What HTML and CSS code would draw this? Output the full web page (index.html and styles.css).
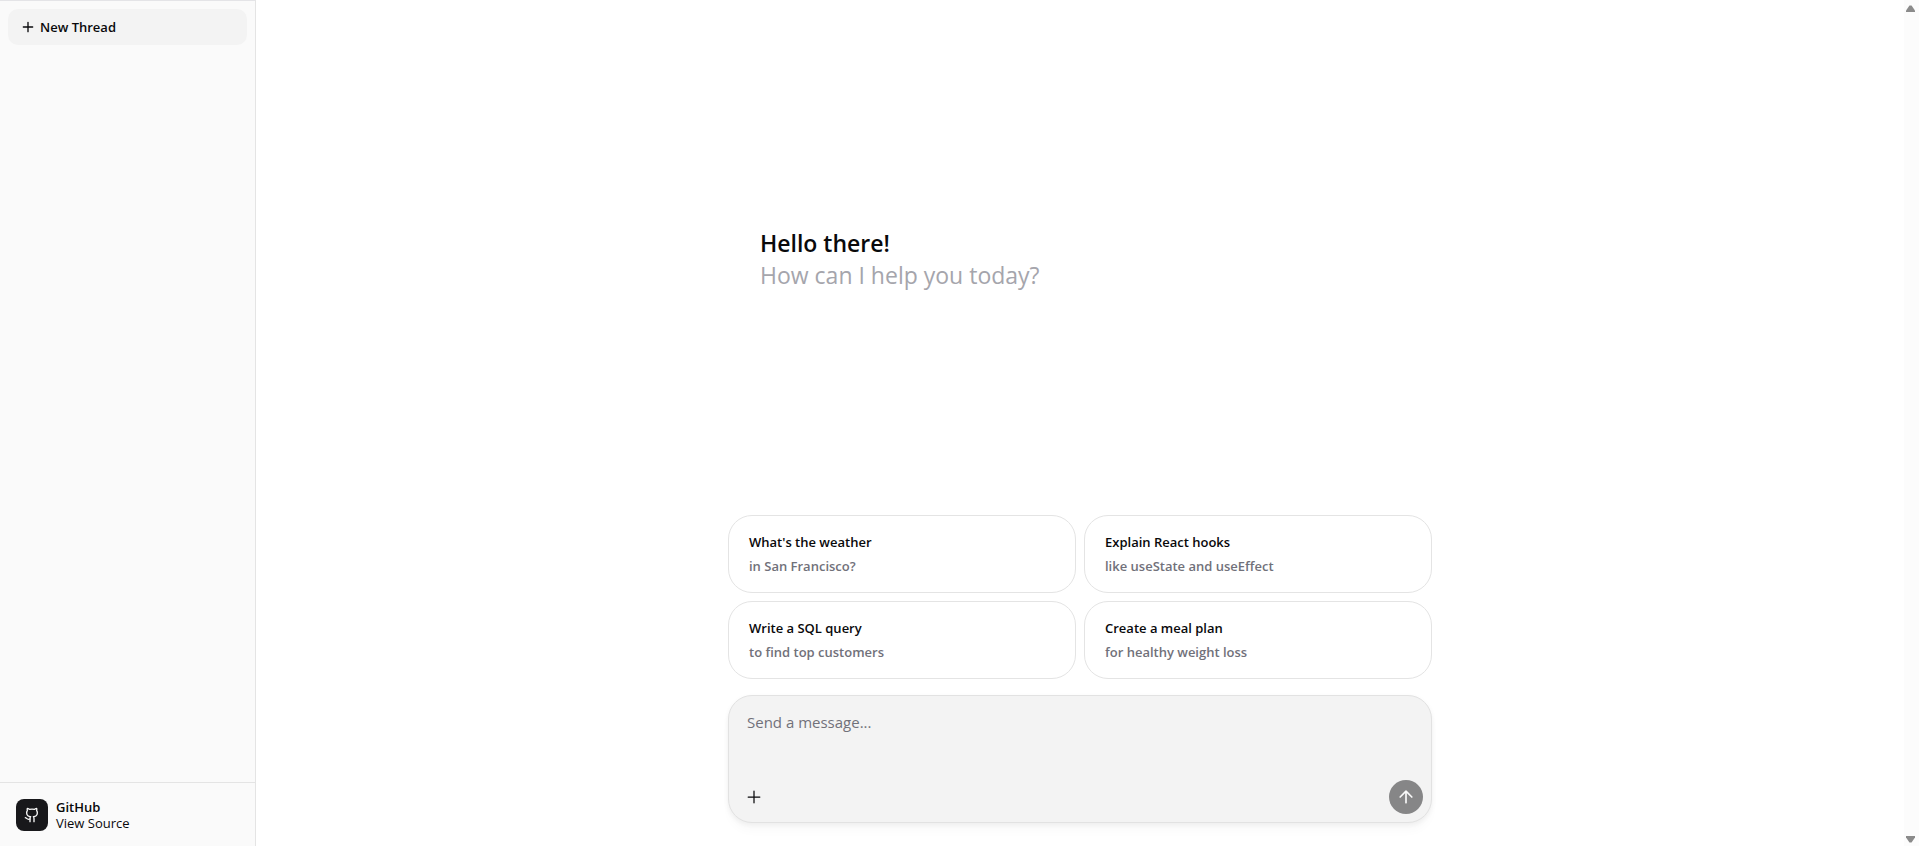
FILE: index.html
```html
<!DOCTYPE html>
<html lang="en">
<head>
<meta charset="utf-8">
<meta name="viewport" content="width=device-width, initial-scale=1">
<title>New Thread</title>
<link rel="stylesheet" href="styles.css">
</head>
<body>
<div class="app">
  <aside class="sidebar">
    <nav class="threads">
      <button class="new-thread" type="button">
        <svg class="icon" viewBox="0 0 24 24" aria-hidden="true"><path d="M5 12h14M12 5v14"/></svg>
        New Thread
      </button>
    </nav>
    <a class="source" href="#">
      <span class="source-logo">
        <svg class="icon" viewBox="0 0 24 24" aria-hidden="true"><path d="M15 22v-4a4.800 4.800 0 0 0-1-3.500c3 0 6-2 6-5.500.08-1.250-.27-2.480-1-3.500.28-1.150.28-2.350 0-3.500 0 0-1 0-3 1.500-2.640-.5-5.360-.5-8 0C6 2 5 2 5 2c-.3 1.150-.3 2.350 0 3.500A5.403 5.403 0 0 0 4 9c0 3.500 3 5.500 6 5.500-.39.49-.68 1.050-.85 1.650-.17.6-.22 1.230-.15 1.850v4"/><path d="M9 18c-4.510 2-5-2-7-2"/></svg>
      </span>
      <span class="source-text">
        <span class="source-name">GitHub</span>
        <span>View Source</span>
      </span>
    </a>
  </aside>
  <main class="chat">
    <div class="thread">
      <div class="welcome">
        <h1 class="greeting">Hello there!</h1>
        <p class="prompt">How can I help you today?</p>
      </div>
      <div class="suggestions">
        <button class="card" type="button"><span>What's the weather</span><span class="card-detail">in San Francisco?</span></button>
        <button class="card" type="button"><span>Explain React hooks</span><span class="card-detail">like useState and useEffect</span></button>
        <button class="card" type="button"><span>Write a SQL query</span><span class="card-detail">to find top customers</span></button>
        <button class="card" type="button"><span>Create a meal plan</span><span class="card-detail">for healthy weight loss</span></button>
      </div>
      <form class="composer">
        <textarea class="message" rows="1" placeholder="Send a message..." aria-label="Message"></textarea>
        <div class="actions">
          <button class="attach" type="button" aria-label="Add attachment">
            <svg class="icon icon-large" viewBox="0 0 24 24" aria-hidden="true"><path d="M5 12h14M12 5v14"/></svg>
          </button>
          <button class="send" type="submit" aria-label="Send message" disabled>
            <svg class="icon icon-large icon-bold" viewBox="0 0 24 24" aria-hidden="true"><path d="m5 12 7-7 7 7M12 19V5"/></svg>
          </button>
        </div>
      </form>
    </div>
  </main>
  <div class="scroll-track" aria-hidden="true">
    <svg class="scroll-arrow" viewBox="0 0 9 7"><path d="M3.500.5h2L9 5.500V7H0V5.500z"/></svg>
    <svg class="scroll-arrow" viewBox="0 0 9 7"><path d="M3.500 6.500h2L9 1.500V0H0v1.500z"/></svg>
  </div>
</div>
</body>
</html>
```

FILE: styles.css
```css
* { box-sizing: border-box; }

body {
  margin: 0;
  background: #fff;
  color: #09090b;
  font-family: "Segoe UI", "Open Sans", "Noto Sans", sans-serif;
  font-size: 13px;
  line-height: 20px;
}

button, textarea { font: inherit; color: inherit; }
button { border: 0; padding: 0; background: none; cursor: pointer; }

.app {
  display: grid;
  grid-template-columns: 256px 1fr 15px;
  min-height: 100vh;
}

.icon {
  width: 16px;
  height: 16px;
  flex: none;
  fill: none;
  stroke: currentColor;
  stroke-width: 2;
  stroke-linecap: round;
  stroke-linejoin: round;
}
.icon-large { width: 20px; height: 20px; stroke-width: 1.5; }
.icon-bold { stroke-width: 2; }

.sidebar {
  display: flex;
  flex-direction: column;
  background: #fafafa;
  border-top: 1px solid #e4e4e7;
  border-right: 1px solid #e4e4e4;
}

.threads { flex: 1; padding: 8px; }

.new-thread {
  display: flex;
  align-items: center;
  gap: 4px;
  width: 100%;
  height: 36px;
  padding: 0 12px;
  border-radius: 10px;
  background: #f3f3f3;
  font-weight: 600;
}

.source {
  display: flex;
  align-items: center;
  gap: 8px;
  padding: 16px 16px 15px;
  border-top: 1px solid #e4e4e4;
  color: inherit;
  line-height: 16px;
  text-decoration: none;
}

.source-logo {
  display: grid;
  place-items: center;
  width: 32px;
  height: 32px;
  border-radius: 8px;
  background: #18181b;
  color: #fafafa;
}
.source-text { display: flex; flex-direction: column; }
.source-name { font-weight: 600; }

.chat {
  display: flex;
  justify-content: center;
  border-top: 1px solid #fff;
}

.thread {
  display: flex;
  flex-direction: column;
  width: 100%;
  max-width: 704px;
  padding-bottom: 23px;
}

.welcome {
  flex: 1;
  display: flex;
  flex-direction: column;
  justify-content: center;
  padding: 2px 32px 0;
  font-size: 23px;
  line-height: 32px;
}
.greeting { margin: 0; font-size: inherit; font-weight: 600; }
.prompt { margin: 0; color: #a5a5ac; }

.suggestions {
  display: grid;
  grid-template-columns: 1fr 1fr;
  gap: 8px;
  margin-bottom: 16px;
}

.card {
  display: flex;
  flex-direction: column;
  gap: 4px;
  padding: 16px 20px;
  border: 1px solid #e4e4e4;
  border-radius: 24px;
  font-weight: 600;
  text-align: left;
}
.card-detail { color: #71717a; }

.composer {
  display: flex;
  flex-direction: column;
  justify-content: space-between;
  min-height: 128px;
  border: 1px solid #e2e2e2;
  border-radius: 24px;
  background: #f3f3f3;
  box-shadow: 0 9px 9px rgba(0, 0, 0, 0.02), 0 2px 5px rgba(0, 0, 0, 0.06);
}

.message {
  display: block;
  height: 52px;
  padding: 14px 18px;
  border: 0;
  outline: 0;
  resize: none;
  overflow: hidden;
  background: transparent;
  font-size: 15px;
  line-height: 24px;
}
.message::placeholder { color: #71717a; opacity: 1; }

.actions {
  display: flex;
  align-items: center;
  justify-content: space-between;
  padding: 8px;
}

.attach, .send {
  display: grid;
  place-items: center;
  width: 34px;
  height: 34px;
  border-radius: 50%;
}
.send { background: #868687; color: #f9f9f9; }

.scroll-track {
  display: flex;
  flex-direction: column;
  align-items: flex-start;
  justify-content: space-between;
  padding: 5px 2px 3px;
  background: #fcfcfc;
}
.scroll-arrow { width: 9px; height: 7px; fill: #8b8b8b; }
```
